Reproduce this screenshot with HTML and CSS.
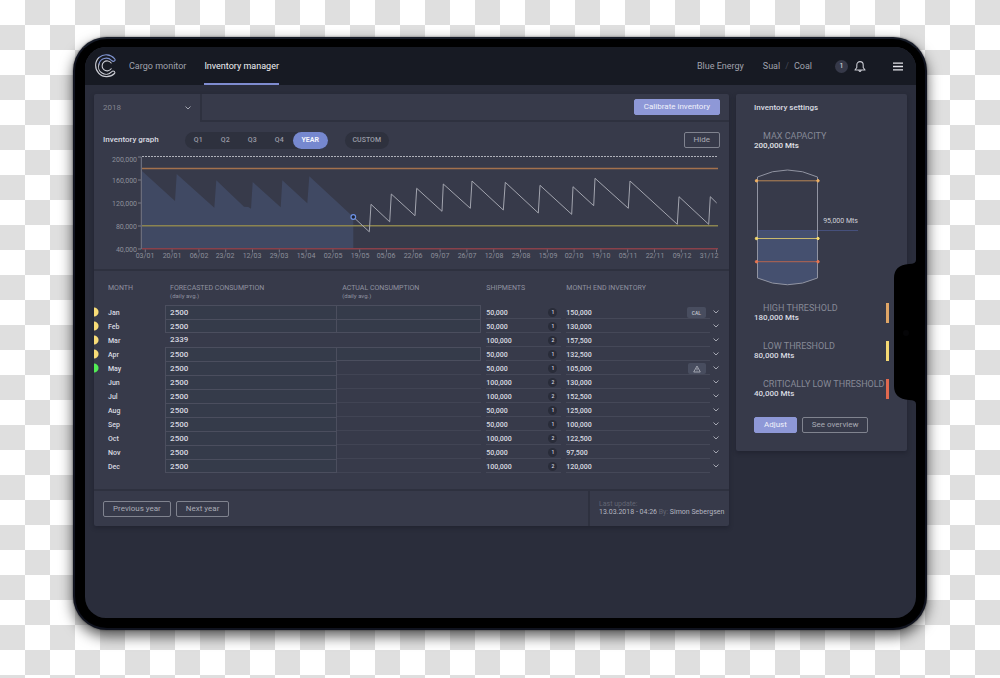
FILE: index.html
```html
<!DOCTYPE html>
<html lang="en">
<head>
<meta charset="utf-8">
<title>Inventory manager</title>
<link rel="stylesheet" href="styles.css">
</head>
<body>
<div class="device">
  <div class="screen">
    <header class="topbar">
      <svg class="logo" viewBox="0 0 24 24" width="24" height="24" fill="none" stroke-width="1.1" stroke-linecap="round">
        <path stroke="#c9cad2" d="M20.5 19.5 A11 11 0 1 1 5 3.500"/>
        <path stroke="#7f93cf" d="M5 3.500 A11 11 0 0 1 20.500 4.600 Q22 6.500 20 7.300 Q18.500 7.500 17.500 6.300 A7.500 7.500 0 0 0 5 10"/>
        <path stroke="#c9cad2" d="M5 10 A7.500 7.500 0 0 0 17.500 17.800 Q19 16.400 20.400 17.500 Q21.400 18.600 20.500 19.500"/>
        <path stroke="#c9cad2" d="M17.200 9 A5 5 0 1 0 17.200 14.800"/>
      </svg>
      <nav class="nav">
        <a href="#">Cargo monitor</a>
        <a href="#" class="current">Inventory manager</a>
      </nav>
      <div class="account">
        <a href="#" class="company">Blue Energy</a>
        <a href="#">Sual</a><span class="slash">/</span><a href="#">Coal</a>
      </div>
      <span class="count">1</span>
      <button class="icon-btn bell" aria-label="Notifications">
        <svg viewBox="0 0 12 13" width="12" height="13" fill="none" stroke="#c9cad2" stroke-width="1.1" stroke-linejoin="round"><path d="M1 10 L2.800 7.500 V5 A3.200 3.400 0 0 1 9.200 5 V7.500 L11 10 Z M4.800 10.200 Q6 12.800 7.200 10.200"/></svg>
      </button>
      <button class="icon-btn" aria-label="Menu">
        <svg viewBox="0 0 10 9" width="10" height="9" stroke="#e4e4ea" stroke-width="1.300"><path d="M0 1.200 H10 M0 4.500 H10 M0 7.800 H10"/></svg>
      </button>
    </header>

    <div class="content">
      <main class="panel">
        <div class="filter">
          <div class="year-box">
            <select class="year" aria-label="Year"><option>2018</option></select>
            <svg class="chev" viewBox="0 0 6 4" width="6" height="4"><path d="M.5 .5 L3 3 L5.500 .5"/></svg>
          </div>
          <div class="filter-actions"><button class="btn primary calibrate">Calibrate inventory</button></div>
        </div>

        <section class="graph">
          <div class="graph-head">
            <h2>Inventory graph</h2>
            <div class="pills">
              <button>Q1</button><button>Q2</button><button>Q3</button><button>Q4</button><button class="on">YEAR</button>
            </div>
            <button class="custom">CUSTOM</button>
            <button class="btn hide">Hide</button>
          </div>
          <svg class="chart" viewBox="94 150 635 119">
            <path class="area" d="M142 171 L175 201 L176.700 174 L214.300 207.700 L216.300 180.300 L244 206.700 L248.300 207 L251 208.700 L252.700 182 L280.700 207.300 L282.300 180.300 L307.300 203.300 L309.300 176.300 L353.300 217 V249 H142 Z"/>
            <path class="max" d="M142 156.500 H718"/>
            <path class="axis" d="M138 157 H141.300 V249 H138 M138 180 H141 M138 203 H141 M138 226 H141"/>
            <path class="high" d="M142 168.400 H718"/>
            <path class="low" d="M142 225.800 H718"/>
            <path class="critical" d="M142 248.800 H718"/>
            <path class="line" d="M353.300 217 L369.300 231.800 L371 204.300 L389.700 221.800 L391.300 194 L415 215.700 L416.700 188.300 L442 211.300 L443.300 184 L470.300 208.300 L472 181 L503.300 210 L505.300 182.300 L538.300 213 L540 185.300 L571.700 214.300 L573 186.700 L593.700 205.700 L595 178.300 L628.300 208.300 L630 181 L677.300 224.300 L679 196.700 L708.700 224.300 L710.300 196.700 L716.700 203"/>
            <circle cx="353.300" cy="217" r="2.300" fill="#1d2130" stroke="#6d92e6" stroke-width="1.200"/>
            <path class="axis" d="M145.300 249.500v3 M172.100 249.500v3 M198.900 249.500v3 M225.700 249.500v3 M252.500 249.500v3 M279.300 249.500v3 M306.100 249.500v3 M332.900 249.500v3 M359.700 249.500v3 M386.500 249.500v3 M413.300 249.500v3 M440.100 249.500v3 M466.900 249.500v3 M493.700 249.500v3 M520.500 249.500v3 M547.300 249.500v3 M574.100 249.500v3 M600.900 249.500v3 M627.700 249.500v3 M654.500 249.500v3 M681.300 249.500v3 M716.500 249.500v3"/>
            <g text-anchor="end">
              <text x="137" y="162">200,000</text><text x="137" y="183">160,000</text><text x="137" y="206">120,000</text><text x="137" y="229">80,000</text><text x="137" y="252">40,000</text>
            </g>
            <g text-anchor="middle">
              <text x="145" y="258">03/01</text><text x="172" y="258">20/01</text><text x="199" y="258">06/02</text><text x="225" y="258">23/02</text><text x="252" y="258">12/03</text><text x="279" y="258">29/03</text><text x="306" y="258">15/04</text><text x="333" y="258">02/05</text><text x="360" y="258">19/05</text><text x="386" y="258">05/06</text><text x="413" y="258">22/06</text><text x="440" y="258">09/07</text><text x="467" y="258">26/07</text><text x="494" y="258">12/08</text><text x="521" y="258">29/08</text><text x="548" y="258">15/09</text><text x="574" y="258">02/10</text><text x="601" y="258">19/10</text><text x="628" y="258">05/11</text><text x="655" y="258">22/11</text><text x="682" y="258">09/12</text><text x="709" y="258">31/12</text>
            </g>
          </svg>
        </section>

        <section class="months">
          <table>
            <colgroup><col class="c-month"><col class="c-fore"><col class="c-act"><col class="c-ship"><col class="c-inv"><col class="c-more"></colgroup>
            <thead>
              <tr><th class="m">MONTH</th><th>FORECASTED CONSUMPTION<small>(daily avg.)</small></th><th>ACTUAL CONSUMPTION<small>(daily avg.)</small></th><th>SHIPMENTS</th><th>MONTH END INVENTORY</th><th></th></tr>
            </thead>
            <tbody id="rows"></tbody>
          </table>
        </section>

        <footer class="foot">
          <div class="pager"><button class="btn">Previous year</button><button class="btn">Next year</button></div>
          <div class="update"><span>Last update:</span><p><b>13.03.2018 - 04:26</b> By: <b>Simon Sebergsen</b></p></div>
        </footer>
      </main>

      <aside class="settings">
        <h2>Inventory settings</h2>
        <dl class="capacity"><dt>MAX CAPACITY</dt><dd>200,000 Mts</dd></dl>
        <svg class="tank" viewBox="753 168 106 119" width="106" height="119">
          <path fill="#45506f" d="M756.500 230.500 H816.500 V278 Q786.500 291.500 756.500 278 Z"/>
          <path stroke="#46507c" d="M756.500 230.500 H857"/>
          <path fill="none" stroke="#9194a2" d="M756.500 177 Q786.500 163 816.500 177 V278 Q786.500 291.500 756.500 278 Z"/>
          <g stroke="#b98655" fill="#eeb063"><path d="M756 180.800 H817"/><circle cx="755.500" cy="180.800" r="1.200" stroke="#eeb063"/><circle cx="817" cy="180.800" r="1.200" stroke="#eeb063"/></g>
          <g stroke="#c9b96c" fill="#f7dc6e"><path d="M756 238.500 H817"/><circle cx="755.500" cy="238.500" r="1.200" stroke="#f7dc6e"/><circle cx="817" cy="238.500" r="1.200" stroke="#f7dc6e"/></g>
          <g stroke="#b5644f" fill="#e87550"><path d="M756 261.700 H817"/><circle cx="755.500" cy="261.700" r="1.200" stroke="#e87550"/><circle cx="817" cy="261.700" r="1.200" stroke="#e87550"/></g>
          <text x="857" y="223" text-anchor="end">95,000 Mts</text>
        </svg>
        <dl class="threshold high-t"><dt>HIGH THRESHOLD</dt><dd>180,000 Mts</dd></dl>
        <dl class="threshold low-t"><dt>LOW THRESHOLD</dt><dd>80,000 Mts</dd></dl>
        <dl class="threshold crit-t"><dt>CRITICALLY LOW THRESHOLD</dt><dd>40,000 Mts</dd></dl>
        <div class="settings-actions"><button class="btn primary">Adjust</button><button class="btn">See overview</button></div>
      </aside>
    </div>
    <svg class="notch" viewBox="0 0 22 144" width="22" height="144"><path d="M22 0 V144 Q22 140 15 140 Q0 139 0 126 V18 Q0 5 15 4 Q22 4 22 0 Z"/><circle cx="12" cy="73" r="3" fill="#050507"/></svg>
  </div>
</div>
<script src="rows.js"></script>
</body>
</html>
```

FILE: rows.js
```js
// month, forecast, actual field open, shipments, shipment count, month end, status, tag
const months = [
  ["Jan", 2500, true, "50,000", 1, "150,000", "warn", "cal"],
  ["Feb", 2500, true, "50,000", 1, "130,000", "warn", ""],
  ["Mar", 2339, false, "100,000", 2, "157,500", "warn", ""],
  ["Apr", 2500, true, "50,000", 1, "132,500", "warn", ""],
  ["May", 2500, false, "50,000", 1, "105,000", "good", "alert"],
  ["Jun", 2500, false, "100,000", 2, "130,000", "", ""],
  ["Jul", 2500, false, "100,000", 2, "152,500", "", ""],
  ["Aug", 2500, false, "50,000", 1, "125,000", "", ""],
  ["Sep", 2500, false, "50,000", 1, "100,000", "", ""],
  ["Oct", 2500, false, "100,000", 2, "122,500", "", ""],
  ["Nov", 2500, false, "50,000", 1, "97,500", "", ""],
  ["Dec", 2500, false, "100,000", 2, "120,000", "", ""]
];
const tags = {
  "": "",
  cal: '<span class="tag">CAL</span>',
  alert: '<span class="tag"><svg viewBox="0 0 8 8" width="8" height="8" fill="none" stroke="#b5b7c2" stroke-width=".8"><path d="M4 1 L7.300 7 H.7 Z M4 3 V5 M4 5.600 V6.300"/></svg></span>'
};
document.getElementById("rows").innerHTML = months.map(([name, fore, open, ship, count, end, status, tag]) => `
  <tr>
    <td class="m ${status}">${name}</td>
    <td>${name === "Mar" ? `<div class="plain">${fore}</div>` : `<input class="field" value="${fore}" aria-label="${name} forecasted consumption">`}</td>
    <td>${open ? `<input class="field actual" aria-label="${name} actual consumption">` : `<div class="${name === "Mar" ? "plain" : "ruled"}"></div>`}</td>
    <td><div class="cell"><span>${ship}</span><span class="dot">${count}</span></div></td>
    <td><div class="cell"><span>${end}</span>${tags[tag]}</div></td>
    <td><button class="icon-btn more" aria-label="Show ${name}"><svg class="chev" viewBox="0 0 6 4" width="6" height="4"><path d="M.5 .5 L3 3 L5.500 .5"/></svg></button></td>
  </tr>`).join("");
```

FILE: styles.css
```css
* { box-sizing: border-box; }
body {
  margin: 0;
  min-height: 100vh;
  padding: 37px 73px 48px;
  display: flex;
  font: 8px/10px Roboto, "Liberation Sans", sans-serif;
  color: #d9dae1;
  background: repeating-conic-gradient(#dfdfdf 0 25%, #fff 0 50%) 0 0 / 50px 50px;
}
h2, dl, dd, p { margin: 0; }
h2 { font-size: 8px; line-height: 10px; font-weight: 500; color: #d9dae1; }
a { color: inherit; text-decoration: none; }
button, input, select { font: inherit; color: inherit; margin: 0; padding: 0; border: 0; background: none; }

.device {
  flex: 1;
  display: flex;
  padding: 8px 9px 10px 10px;
  background: #000;
  border: 2px solid #10131f;
  border-top-color: #171c28;
  border-radius: 34px;
  box-shadow: 0 6px 14px rgba(0, 0, 0, .65), 0 0 2px rgba(0, 0, 0, .6);
}
.screen {
  flex: 1;
  position: relative;
  display: flex;
  flex-direction: column;
  background: #2a2d3b;
  border-radius: 21px;
  overflow: hidden;
}
.notch { position: absolute; right: 0; top: 213px; }

.topbar {
  height: 38px;
  display: flex;
  align-items: center;
  padding: 0 13px 0 9px;
  background: #171a23;
  font-size: 9px;
  color: #a0a2ad;
}
.nav { display: flex; align-self: stretch; gap: 18px; margin-left: 11px; }
.nav a { display: flex; align-items: center; }
.nav .current { color: #f0f0f4; box-shadow: inset 0 -2px #7f8cd0; }
.account { display: flex; margin-left: auto; }
.company { margin-right: 19px; }
.slash { margin: 0 5px; color: #454855; }
.count {
  width: 13px; height: 13px;
  margin: 0 6px 0 23px;
  border-radius: 50%;
  background: #363949;
  color: #e4e4ea;
  font-size: 7px; line-height: 13px;
  text-align: center;
}
.icon-btn { display: flex; }
.bell { margin-right: 27px; }

.content { display: flex; align-items: flex-start; gap: 7px; padding: 9px; }
.panel, .settings { background: #373a4a; border-radius: 2px; box-shadow: 0 2px 4px rgba(20, 22, 32, .4); }
.panel { flex: 1; min-width: 0; }

.filter { display: flex; height: 28px; }
.year-box { width: 106px; display: flex; align-items: center; padding: 0 9px; }
.year { flex: 1; appearance: none; color: #82858f; }
.chev { fill: none; stroke: #a4a6b1; stroke-width: 1; }
.filter-actions {
  flex: 1;
  display: flex;
  align-items: center;
  justify-content: flex-end;
  padding-right: 9px;
  border-left: 2px solid #2e313f;
  border-bottom: 2px solid #2e313f;
}
.btn {
  height: 16px;
  padding: 0 9px;
  border: 1px solid #80838f;
  border-radius: 2px;
  color: #a9abb5;
  line-height: 10px;
}
.primary { background: #8e98d7; border-color: #8e98d7; color: #f1f2fb; }

.graph { border-bottom: 2px solid #2e313f; }
.graph-head { display: flex; align-items: center; height: 28px; padding: 8px 9px 0; }
.pills { display: flex; margin-left: 26px; border-radius: 9px; background: #2e313e; }
.pills button, .custom { height: 17px; min-width: 27px; font-size: 7px; font-weight: 500; color: #9a9ca7; border-radius: 9px; }
.pills .on { width: 35px; background: #7688cf; color: #f4f5fc; font-weight: 700; }
.custom { width: 44px; margin-left: 17px; background: #2e313e; }
.hide { margin-left: auto; }
.chart { display: block; width: 100%; }
.chart text { font-size: 7px; fill: #8e909b; }
.chart path { fill: none; }
.chart .area { fill: #404963; }
.max { stroke: #b0b2bb; stroke-dasharray: 2 1; }
.axis { stroke: #777a88; }
.high { stroke: #a3714d; stroke-width: 1.5; }
.low { stroke: #8b8450; stroke-width: 1.5; }
.critical { stroke: #8a414a; stroke-width: 1.5; }
.line { stroke: #a3a5af; }

.months { padding-bottom: 16px; border-bottom: 2px solid #2e313f; }
table { width: 100%; table-layout: fixed; border-collapse: collapse; font-size: 7px; font-weight: 500; }
.c-month { width: 11.2%; }
.c-fore { width: 27.1%; }
.c-act { width: 22.7%; }
.c-ship { width: 12.6%; }
.c-inv { width: 23.4%; }
.c-more { width: 3%; }
th { height: 34px; padding: 13px 0 0 5px; text-align: left; vertical-align: top; font-weight: 400; line-height: 8px; color: #9092a0; white-space: nowrap; }
th small { display: block; font-size: 6px; }
td { height: 14px; padding: 0; line-height: 12px; }
.m { padding-left: 14px; }
td.m { padding-top: 2px; }
.warn { background: radial-gradient(circle at 0 50%, #f8dc77 0 4px, transparent 5px); }
.good { background: radial-gradient(circle at 0 50%, #52ec55 0 4px, transparent 5px); }
.field { display: block; width: 100%; height: 14px; padding: 0 4px; background: #353b4a; border: 1px solid #4b4e5e; border-width: 1px 1px 0; font-size: 8px; }
tr:last-child .field, tr:nth-child(2) .field { border-bottom-width: 1px; }
.actual { border-left: 0; }
.plain { height: 14px; padding-left: 5px; font-size: 8px; line-height: 14px; }
.ruled { height: 14px; border-bottom: 1px solid #414454; }
tr:nth-child(4) .actual { border-bottom-width: 1px; }
.cell { display: flex; align-items: center; justify-content: space-between; height: 14px; margin-left: 5px; padding-top: 2px; border-bottom: 1px solid #454858; }
.dot { width: 9px; height: 9px; margin-right: 4px; border-radius: 50%; background: #292c39; font-size: 5px; line-height: 9px; text-align: center; }
.tag { display: flex; align-items: center; height: 11px; margin-right: 4px; padding: 0 5px; border-radius: 2px; background: #484d5f; font-size: 5px; color: #c3c5ce; }
.more { margin-left: 3px; }

.foot { display: flex; min-height: 35px; }
.pager { flex: 1; display: flex; align-items: center; gap: 5px; padding-left: 9px; }
.update { width: 141px; padding: 9px 0 0 9px; border-left: 2px solid #2e313f; font-size: 7px; line-height: 8px; color: #626573; white-space: nowrap; }
.update b { font-weight: 400; color: #b4b6c0; }

.settings { width: 171px; padding: 9px 18px 18px; }
.capacity { margin-top: 18px; }
dt { padding-left: 9px; font-size: 9px; color: #868996; line-height: 10px; white-space: nowrap; }
dd { color: #e0e1e7; font-weight: 500; line-height: 10px; }
.tank { display: block; margin: 17px 0 16px; }
.tank text { font-size: 7px; fill: #d0d1d9; }
.threshold { height: 20px; margin-bottom: 18px; border-right: 3px solid; }
.high-t { border-color: #dfa566; }
.low-t { border-color: #f4d873; }
.crit-t { border-color: #e0694f; }
.threshold dd, .threshold dt { color: inherit; }
.threshold dt { color: #868996; }
.settings-actions { display: flex; gap: 5px; }
```
